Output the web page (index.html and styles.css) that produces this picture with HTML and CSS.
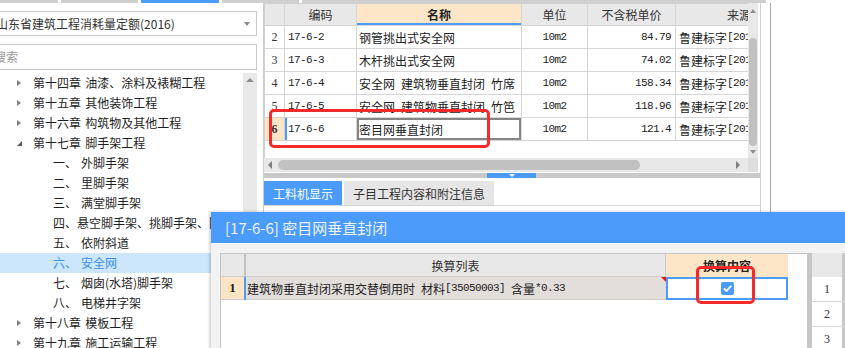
FILE: index.html
```html
<!DOCTYPE html>
<html lang="zh-CN">
<head>
<meta charset="utf-8">
<title>定额</title>
<link rel="stylesheet" href="styles.css">
</head>
<body>
<div class="app">
  <div class="topstrip">
    <span class="seg s1"></span><span class="seg s2"></span><span class="seg s3 active"></span><span class="seg s4"></span><span class="seg s5"></span>
  </div>
  <div class="main">
    <aside class="left">
      <div class="combo"><span>山东省建筑工程消耗量定额(2016)</span><i class="caret"></i></div>
      <div class="search">搜索</div>
      <div class="treewrap">
        <ul class="tree">
          <li class="chap"><i class="tri"></i>第十四章 油漆、涂料及裱糊工程</li>
          <li class="chap"><i class="tri"></i>第十五章 其他装饰工程</li>
          <li class="chap"><i class="tri"></i>第十六章 构筑物及其他工程</li>
          <li class="chap open"><i class="tri"></i>第十七章 脚手架工程</li>
          <li class="sub"><span class="num">一、</span>外脚手架</li>
          <li class="sub"><span class="num">二、</span>里脚手架</li>
          <li class="sub"><span class="num">三、</span>满堂脚手架</li>
          <li class="sub"><span class="num">四、</span>悬空脚手架、挑脚手架、防护架</li>
          <li class="sub"><span class="num">五、</span>依附斜道</li>
          <li class="sub selected"><span class="num">六、</span>安全网</li>
          <li class="sub"><span class="num">七、</span>烟囱(水塔)脚手架</li>
          <li class="sub"><span class="num">八、</span>电梯井字架</li>
          <li class="chap"><i class="tri"></i>第十八章 模板工程</li>
          <li class="chap"><i class="tri"></i>第十九章 施工运输工程</li>
        </ul>
        <div class="lscroll"><i class="arrow-up"></i></div>
      </div>
    </aside>
    <div class="split"></div>
    <section class="right">
      <div class="gridarea">
        <div class="grid">
          <div class="row head">
            <div class="c rn"></div>
            <div class="c">编码</div>
            <div class="c hl">名称</div>
            <div class="c">单位</div>
            <div class="c">不含税单价</div>
            <div class="c src-h">来源</div>
          </div>
          <div class="row">
            <div class="c rn">2</div>
            <div class="c code mono">17-6-2</div>
            <div class="c name">钢管挑出式安全网</div>
            <div class="c unit mono">10m2</div>
            <div class="c price mono">84.79</div>
            <div class="c src">鲁建标字<span class="mono">[2016]</span></div>
          </div>
          <div class="row">
            <div class="c rn">3</div>
            <div class="c code mono">17-6-3</div>
            <div class="c name">木杆挑出式安全网</div>
            <div class="c unit mono">10m2</div>
            <div class="c price mono">74.02</div>
            <div class="c src">鲁建标字<span class="mono">[2016]</span></div>
          </div>
          <div class="row">
            <div class="c rn">4</div>
            <div class="c code mono">17-6-4</div>
            <div class="c name">安全网 建筑物垂直封闭 竹席</div>
            <div class="c unit mono">10m2</div>
            <div class="c price mono">158.34</div>
            <div class="c src">鲁建标字<span class="mono">[2016]</span></div>
          </div>
          <div class="row">
            <div class="c rn">5</div>
            <div class="c code mono">17-6-5</div>
            <div class="c name">安全网 建筑物垂直封闭 竹笆</div>
            <div class="c unit mono">10m2</div>
            <div class="c price mono">118.96</div>
            <div class="c src">鲁建标字<span class="mono">[2016]</span></div>
          </div>
          <div class="row cur">
            <div class="c rn">6</div>
            <div class="c code mono">17-6-6</div>
            <div class="c name edit">密目网垂直封闭</div>
            <div class="c unit mono">10m2</div>
            <div class="c price mono">121.4</div>
            <div class="c src">鲁建标字<span class="mono">[2016]</span></div>
          </div>
        </div>
        <div class="vbar"><i class="arrow-up"></i><span class="vthumb"></span><i class="arrow-down"></i></div>
      </div>
      <div class="hscroll">
        <div class="htrack"><i class="arrow-left"></i><span class="hthumb"></span><i class="arrow-right"></i></div>
        <div class="corner"></div>
      </div>
      <div class="splitter"><span class="handle"><i class="hdown"></i></span></div>
      <div class="tabs">
        <div class="tab active">工料机显示</div>
        <div class="tab">子目工程内容和附注信息</div>
      </div>
      <div class="tabbody"></div>
    </section>
    <div class="gap"></div>
    <div class="vline"></div>
    <div class="far"></div>
  </div>

  <div class="dialog">
    <div class="dtitle">[17-6-6] 密目网垂直封闭</div>
    <div class="dbody">
      <div class="dtable">
        <div class="drow dhead">
          <div class="d-rn"></div>
          <div class="d-sep"></div>
          <div class="d-list">换算列表</div>
          <div class="d-content hl">换算内容</div>
          <div class="d-rest"></div>
        </div>
        <div class="drow dsel">
          <div class="d-rn">1</div>
          <div class="d-sep blue"></div>
          <div class="d-list txt">建筑物垂直封闭采用交替倒用时 材料<span class="mono">[35050003]</span> 含量<span class="mono">*0.33</span><i class="redtri"></i></div>
          <div class="d-content chk">
            <svg width="13" height="13" viewBox="0 0 13 13"><rect width="13" height="13" rx="2" fill="#4a9bfa"/><path d="M3.4 6.8 L5.6 9 L9.7 4.3" stroke="#fff" stroke-width="1.8" fill="none" stroke-linecap="round" stroke-linejoin="round"/></svg>
          </div>
          <div class="d-rest"></div>
        </div>
      </div>
      <div class="dsplit"></div>
      <div class="mini">
        <div class="mhead"><span class="mcell"></span><span class="mfill"></span></div>
        <div class="mrow"><span class="mcell">1</span><span class="mfill"></span></div>
        <div class="mrow"><span class="mcell">2</span><span class="mfill"></span></div>
        <div class="mrow"><span class="mcell">3</span><span class="mfill"></span></div>
      </div>
    </div>
  </div>

  <div class="mark mark1"></div>
  <div class="mark mark2"></div>
</div>
</body>
</html>
```
FILE: styles.css
```css
* { box-sizing: border-box; }
body {
  margin: 0;
  width: 845px;
  height: 348px;
  overflow: hidden;
  background: #fff;
  font-family: "Noto Sans CJK SC", "Noto Sans", sans-serif;
  font-size: 12px;
  color: #222;
}
.app { position: relative; width: 845px; height: 348px; overflow: hidden; }

.mono { font-family: "Liberation Mono", monospace; font-size: 11px; letter-spacing: -0.6px; word-spacing: 0; }

/* top strip */
.topstrip { display: flex; height: 3px; gap: 3px; }
.seg { background: #cfcfcf; height: 3px; }
.s1 { width: 58px; }
.s2 { width: 77px; }
.s3 { width: 78px; }
.s4 { width: 77px; }
.s5 { width: 464px; }
.seg.active { background: #4a9bfa; }

.main { display: flex; height: 345px; }

/* left panel */
.left { width: 262px; flex: none; display: flex; flex-direction: column; overflow: hidden; }
.combo {
  flex: none;
  margin: 8px 0 0 -10px;
  width: 267px; height: 25px;
  border: 1px solid #c9c9c9;
  display: flex; align-items: center;
  padding-left: 5px;
  color: #333;
  white-space: nowrap;
}
.caret {
  margin-left: auto; margin-right: 6px;
  width: 0; height: 0;
  border-left: 3px solid transparent; border-right: 3px solid transparent;
  border-top: 4px solid #8a8a8a;
}
.search {
  flex: none;
  margin: 8px 0 0 -10px;
  width: 267px; height: 26px;
  border: 1px solid #c9c9c9;
  padding-left: 3px;
  line-height: 24px;
  color: #9a9a9a;
}
.treewrap { margin-top: 3px; flex: 1; min-height: 0; display: flex; }
.tree { width: 243px; margin: 0; padding: 0; list-style: none; overflow: hidden; word-spacing: 1.5px; }
.tree li { height: 20px; line-height: 20px; display: flex; align-items: center; white-space: nowrap; color: #1e1e1e; }
.tree .chap { padding-left: 17px; }
.tree .tri {
  width: 0; height: 0; margin-right: 12px;
  border-top: 3.5px solid transparent; border-bottom: 3.5px solid transparent;
  border-left: 4px solid #7d7d7d;
}
.tree .open .tri {
  border-top: 0; border-bottom: 5px solid #5a5a5a;
  border-left: 5px solid transparent;
  margin-right: 11px;
}
.tree .sub { padding-left: 53px; }
.tree .num { display: inline-block; width: 28px; }
.tree .selected { background: #cce6fb; color: #3d8fe6; }
.lscroll { width: 14px; flex: none; background: #e9e9e9; margin-right: 5px; display: flex; justify-content: center; padding-top: 5px; }
.arrow-up {
  display: block; width: 0; height: 0;
  border-left: 4px solid transparent; border-right: 4px solid transparent;
  border-bottom: 4px solid #8f8f8f;
}
.arrow-down {
  display: block; width: 0; height: 0;
  border-left: 4px solid transparent; border-right: 4px solid transparent;
  border-top: 4px solid #8f8f8f;
}

.split { width: 2px; flex: none; background: linear-gradient(90deg, #fff 0 1px, #cdcdcd 1px 2px); }

/* right panel */
.right { width: 497px; flex: none; display: flex; flex-direction: column; border-right: 1px solid #cfcfcf; }
.gridarea { display: flex; height: 155px; flex: none; }
.grid { width: 484px; border-top: 1px solid #d0d0d0; border-left: 1px solid #d0d0d0; }
.row { display: grid; grid-template-columns: 20px 72px 165px 66px 88px 72px; height: 23px; }
.row.head { height: 22px; }
.c {
  border-right: 1px solid #d6d6d6; border-bottom: 1px solid #d6d6d6;
  display: flex; align-items: center;
  white-space: nowrap; overflow: hidden;
}
.head .c { background: #e8e8e8; justify-content: center; color: #333; }
.head .hl { background: #fde6c7; font-weight: bold; box-shadow: inset 0 -2px 0 #4a9bfa; color: #222; }
.head .src-h { justify-content: flex-end; border-right: 0; margin-right: -3px; }
.rn { justify-content: center; font-family: "Liberation Serif", serif; font-size: 12px; color: #333; }
.code { padding-left: 3px; }
.name { padding-left: 2px; word-spacing: 3.3px; }
.unit { justify-content: center; }
.price { justify-content: flex-end; padding-right: 4px; }
.src { padding-left: 3px; border-right: 0; }
.cur .rn { background: #fde4c4; font-weight: bold; }
.cur .code { box-shadow: inset 2px 0 0 #4a9bfa; }
.cur .edit { box-shadow: inset 0 0 0 2px #858585; }

.vbar { width: 10px; margin-right: 2px; background: #e8e8e8; display: flex; flex-direction: column; align-items: center; padding-top: 6px; }
.vbar .arrow-up { border-left-width: 3.5px; border-right-width: 3.5px; }
.vthumb { width: 8px; height: 108px; margin-top: 25px; background: #c1c1c1; border-radius: 4px; }
.vbar .arrow-down { margin-top: 4px; border-left-width: 3.5px; border-right-width: 3.5px; }

.hscroll { display: flex; height: 14px; flex: none; }
.htrack { width: 484px; background: #e8e8e8; display: flex; align-items: center; padding-left: 4px; }
.arrow-left {
  display: block; width: 0; height: 0;
  border-top: 4px solid transparent; border-bottom: 4px solid transparent;
  border-right: 4px solid #7d7d7d;
}
.arrow-right {
  display: block; width: 0; height: 0; margin-left: 96px;
  border-top: 4px solid transparent; border-bottom: 4px solid transparent;
  border-left: 4px solid #7d7d7d;
}
.hthumb { width: 362px; height: 10px; margin-left: 6px; background: #c1c1c1; border-radius: 5px; }
.corner { width: 10px; background: #dedede; }

.splitter { margin-top: 1px; height: 5px; flex: none; background: #c9c9c9; display: flex; }
.handle { margin-left: 223px; width: 49px; background: #4a9bfa; display: flex; justify-content: center; align-items: center; }
.hdown {
  width: 0; height: 0;
  border-left: 3px solid transparent; border-right: 3px solid transparent;
  border-top: 3px solid #fff;
}

.tabs { margin-top: 3px; height: 24px; flex: none; display: flex; gap: 2px; }
.tab { height: 24px; display: flex; align-items: center; justify-content: center; background: #e6e6e6; color: #333; width: 150px; font-size: 12px; }
.tab.active { width: 78px; background: #4a9bfa; color: #fff; }
.tabbody { flex: 1; border-top: 1px solid #d6d6d6; }

.gap { width: 9px; flex: none; }
.vline { width: 1px; flex: none; background: #a9a9a9; }
.far { flex: 1; }

/* dialog */
.dialog {
  position: absolute; left: 211px; top: 212px;
  width: 650px; height: 140px;
  background: #f3f3f3;
  box-shadow: -1px 0 3px rgba(0,0,0,0.25);
  display: flex; flex-direction: column;
}
.dtitle {
  flex: none;
  height: 31px; line-height: 31px;
  background: #4a9bfa; color: #eaf3ff;
  font-size: 15px; padding-left: 14px;
}
.dbody { flex: 1; display: flex; padding: 10px 0 0 9px; }
.dtable { width: 588px; flex: none; border: 1px solid #c6c6c6; border-bottom: 0; background: #fff; }
.drow { display: flex; height: 23px; }
.d-rn { width: 23px; flex: none; display: flex; align-items: center; justify-content: center; font-family: "Liberation Serif", serif; font-size: 13px; }
.d-sep { width: 2px; flex: none; background: #c2c2c2; }
.d-sep.blue { background: #4a9bfa; }
.d-list { width: 420px; flex: none; display: flex; align-items: center; white-space: pre; overflow: hidden; position: relative; }
.d-content { width: 122px; flex: none; display: flex; align-items: center; justify-content: center; }
.d-rest { flex: 1; }
.dhead .d-rn, .dhead .d-list { background: #e8e8e8; border-bottom: 1px solid #cdcdcd; }
.dhead .d-list { justify-content: center; border-right: 1px solid #cdcdcd; color: #333; }
.dhead .d-content { background: #fde6c7; font-weight: bold; }
.dsel .d-rn { background: #fde4c4; font-weight: bold; border-bottom: 1px solid #cdcdcd; }
.dsel .txt { background: #e2dedc; padding-left: 1px; border-bottom: 1px solid #cdcdcd; color: #222; word-spacing: 3.3px; }
.redtri {
  position: absolute; right: 0; top: 0; width: 0; height: 0;
  border-top: 5px solid #e8141c; border-left: 5px solid transparent;
}
.chk { box-shadow: inset 0 0 0 2px #4a9bfa; background: #fff; }
.chk svg { display: block; }
.dsplit { width: 4px; flex: none; background: #c6c6c6; }
.mini { flex: 1; background: #fff; }
.mhead, .mrow { display: flex; }
.mhead { height: 24px; background: #e8e8e8; }
.mrow { height: 25px; border-bottom: 1px solid #d4d4d4; }
.mcell { width: 33px; border-right: 3px solid #c8c8c8; display: flex; align-items: center; justify-content: center; font-family: "Liberation Serif", serif; font-size: 12px; color: #333; }
.mfill { flex: 1; }

/* annotations */
.mark { position: absolute; border: 3px solid #f52b2b; border-radius: 5px; }
.mark1 { left: 269px; top: 109px; width: 221px; height: 39px; }
.mark2 { left: 696px; top: 266px; width: 59px; height: 38px; }
```
